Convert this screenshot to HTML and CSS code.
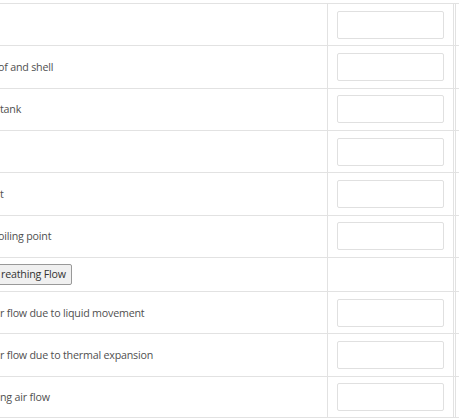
FILE: index.html
```html
<!DOCTYPE html>
<html lang="en">

<head>
  <meta charset="UTF-8">
  <meta name="viewport" content="width=device-width, initial-scale=1.0">
  <title>Tank Breathing</title>
  <link rel="stylesheet" href="styles.css">
</head>

<body>
  <div class="sheet">
    <div class="row">
      <div class="label"></div>
      <div class="field"><input type="text"></div>
      <div class="extra"></div>
    </div>
    <div class="row">
      <div class="label cut">of and shell</div>
      <div class="field"><input type="text"></div>
      <div class="extra"></div>
    </div>
    <div class="row">
      <div class="label">tank</div>
      <div class="field"><input type="text"></div>
      <div class="extra"></div>
    </div>
    <div class="row">
      <div class="label"></div>
      <div class="field"><input type="text"></div>
      <div class="extra"></div>
    </div>
    <div class="row">
      <div class="label">t</div>
      <div class="field"><input type="text"></div>
      <div class="extra"></div>
    </div>
    <div class="row">
      <div class="label cut">oiling point</div>
      <div class="field"><input type="text"></div>
      <div class="extra"></div>
    </div>
    <div class="row short">
      <div class="label"><button class="calc">reathing Flow</button></div>
      <div class="field"></div>
      <div class="extra"></div>
    </div>
    <div class="row">
      <div class="label">r flow due to liquid movement</div>
      <div class="field"><input type="text"></div>
      <div class="extra"></div>
    </div>
    <div class="row">
      <div class="label">r flow due to thermal expansion</div>
      <div class="field"><input type="text"></div>
      <div class="extra"></div>
    </div>
    <div class="row last">
      <div class="label">ng air flow</div>
      <div class="field"><input type="text"></div>
      <div class="extra"></div>
    </div>
  </div>
</body>

</html>
```

FILE: styles.css
```css
body {
  margin: 0;
  overflow: hidden;
  font-family: "Open Sans", sans-serif;
  font-size: 10.7px;
  letter-spacing: -0.2px;
  color: #505050;
  background: #fff;
}

.sheet {
  margin-top: 3px;
}

.row {
  display: grid;
  grid-template-columns: 327px 127px 1fr;
  height: 42.333px;
  box-sizing: border-box;
  border-top: 1px solid #e2e2e2;
}

.row.short {
  height: 34px;
}

.row.last {
  border-bottom: 1px solid #e2e2e2;
}

.label {
  display: flex;
  align-items: center;
  white-space: nowrap;
  overflow: hidden;
}

.label.cut {
  text-indent: -2px;
}

.field {
  display: flex;
  align-items: center;
  padding: 0 9px;
  border-left: 1px solid #e2e2e2;
  border-right: 1px solid #e2e2e2;
}

.extra {
  margin-left: 1px;
  border-left: 1px solid #e2e2e2;
}

input {
  width: 100%;
  height: 28px;
  box-sizing: border-box;
  border: 1px solid #e0e0e0;
  border-radius: 2px;
  background: #fff;
}

.calc {
  margin-left: -12px;
  height: 21px;
  padding: 0 5px 0 12px;
  font-family: "Open Sans", sans-serif;
  font-size: 10.7px;
  letter-spacing: -0.2px;
  color: #333;
  background: #f0f0f0;
  border: 1px solid #999;
  border-radius: 2px;
}
```
